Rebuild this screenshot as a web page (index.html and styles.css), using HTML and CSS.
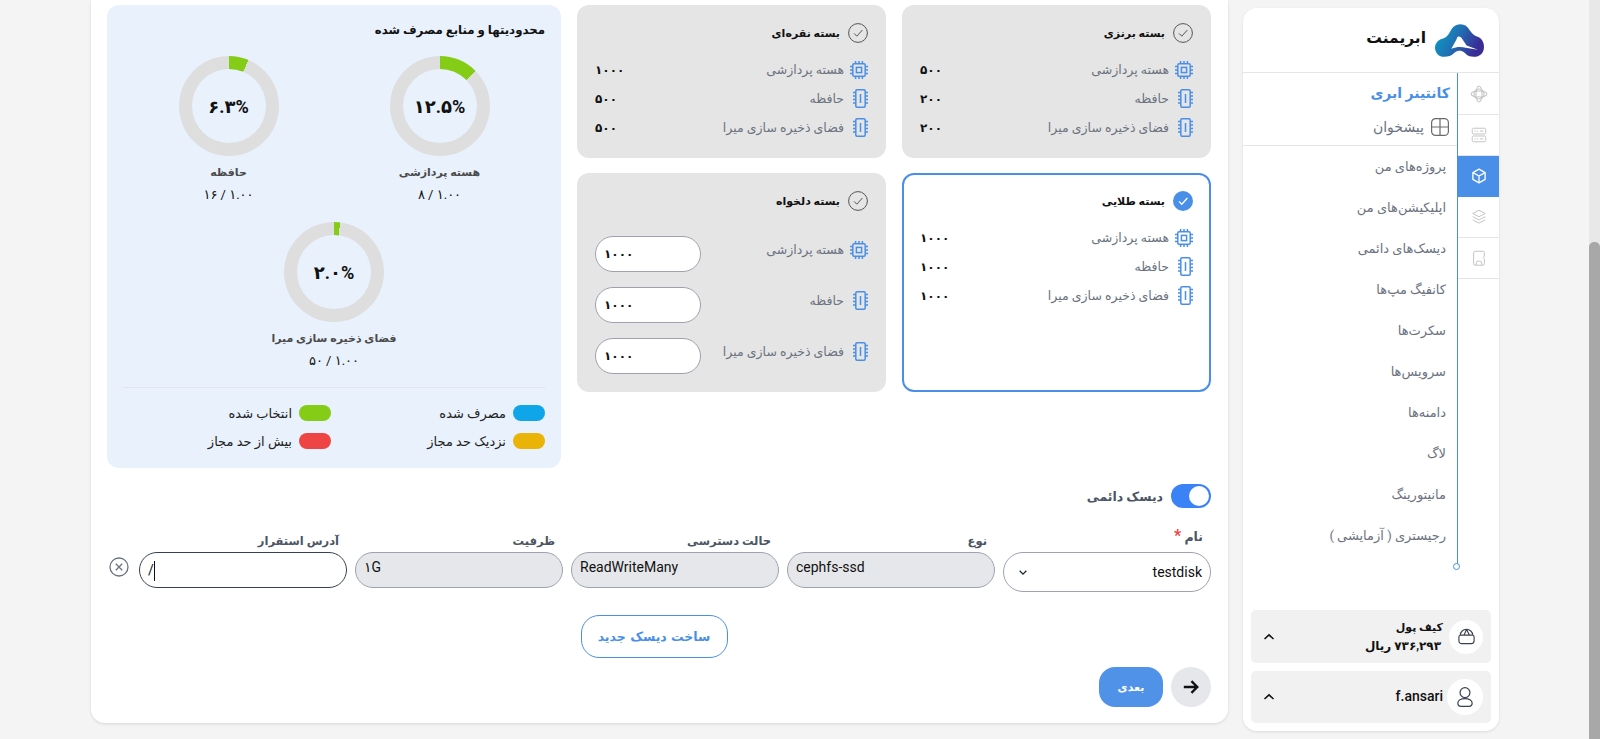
FILE: index.html
```html
<!DOCTYPE html>
<html lang="fa" dir="rtl">
<head>
<meta charset="utf-8">
<title>کانتینر ابری</title>
<link rel="stylesheet" href="styles.css">
</head>
<body>
<svg class="defs" width="0" height="0" aria-hidden="true">
  <defs>
    <symbol id="ic-check" viewBox="0 0 20 20"><circle cx="10" cy="10" r="9.4" fill="none" stroke="currentColor" stroke-width="1"/><path d="M6 10.4l2.8 2.8L14.4 7" fill="none" stroke="currentColor" stroke-width="1"/></symbol>
    <symbol id="ic-cpu" viewBox="0 0 18 18"><g fill="none" stroke="#4a8fe7" stroke-width="1.5"><rect x="2.8" y="2.8" width="12.4" height="12.4" rx="1.2"/><rect x="6.4" y="6.4" width="5.2" height="5.2"/><path d="M5.6 0v2.6M9 0v2.6M12.4 0v2.6M5.6 15.4V18M9 15.4V18M12.4 15.4V18M0 5.6h2.6M0 9h2.6M0 12.4h2.6M15.4 5.6H18M15.4 9H18M15.4 12.4H18"/></g></symbol>
    <symbol id="ic-ram" viewBox="0 0 15 19"><g fill="none" stroke="#4a8fe7" stroke-width="1.5"><rect x="2.8" y=".8" width="9.4" height="17.4" rx="1.2"/><path d="M7.500 5v9M0 3.500h2.600M0 7h2.600M0 10.500h2.600M0 14h2.600M12.400 3.500H15M12.400 7H15M12.400 10.500H15M12.400 14H15"/></g></symbol>
    <symbol id="ic-chev" viewBox="0 0 12 8"><path d="M1.5 6L6 1.8 10.5 6" fill="none" stroke="currentColor" stroke-width="1.6"/></symbol>
  </defs>
</svg>
<div class="page">
  <div class="scrollbar"><div class="thumb"></div></div>

  <aside class="sidebar">
    <header class="brand">
      <svg class="logo" viewBox="0 0 48 32" aria-hidden="true">
        <defs><linearGradient id="lg" x1="0" y1="0" x2="1" y2=".35"><stop offset="0" stop-color="#06a5c9"/><stop offset=".5" stop-color="#1f72b4"/><stop offset="1" stop-color="#3a2c96"/></linearGradient></defs>
        <path fill="url(#lg)" d="M9 32C4 32 0 28 0 23c0-4 3-8 8-9 3-1 5-3 7-7 2-4 5-7 10-7 4 0 7 2 9 6 2 3 4 5 7 6 4 1 7 5 7 10 0 6-4 10-10 10-4 0-6-1-9-4-2-1.500-3-2-5-2s-3 .500-5 2c-3 3-6 4-10 4z"/>
        <path fill="#fff" d="M23 12c2 0 3 1 4 3l4 6 11 4-12-2c-4-1-9-1-14 1l5-9c.700-2 1-3 2-3z"/>
      </svg>
      <span class="brand-name">ابریمنت</span>
    </header>
    <div class="nav">
      <nav class="rail">
        <a class="rail-item"><svg viewBox="0 0 20 20"><g fill="none" stroke="currentColor" stroke-width="1.2"><circle cx="10" cy="10" r="5.6"/><ellipse cx="10" cy="10" rx="8.8" ry="3.4"/><ellipse cx="10" cy="10" rx="3.4" ry="8.8"/></g></svg></a>
        <a class="rail-item"><svg viewBox="0 0 20 20"><g fill="none" stroke="currentColor" stroke-width="1.1"><rect x="2.500" y="2.500" width="15" height="6.400" rx="1.400"/><rect x="2.500" y="11.100" width="15" height="6.400" rx="1.400"/><path d="M5 5.700h1.400M7.600 5.700h1.400M11 5.700h4M5 14.300h1.400M7.600 14.300h1.400M11 14.300h4"/></g></svg></a>
        <a class="rail-item active"><svg viewBox="0 0 20 20"><g fill="none" stroke="currentColor" stroke-width="1.500" stroke-linejoin="round"><path d="M10 2.400l6.800 3.800v7.600L10 17.600l-6.800-3.800V6.200z"/><path d="M3.400 6.300L10 10l6.600-3.700M10 10v7.400"/></g></svg></a>
        <a class="rail-item"><svg viewBox="0 0 20 20"><g fill="none" stroke="currentColor" stroke-width="1.100" stroke-linejoin="round"><path d="M10 2.500l7 3.600-7 3.600-7-3.600z"/><path d="M3 9.600l7 3.600 7-3.600M3 13.200l7 3.600 7-3.600"/></g></svg></a>
        <a class="rail-item"><svg viewBox="0 0 20 20"><g fill="none" stroke="currentColor" stroke-width="1.100" stroke-linejoin="round"><path d="M6 2.500h8.500A1.500 1.500 0 0 1 16 4v4l-1.400 1.400L16 11v5.500a1.500 1.500 0 0 1-1.500 1.500h-9A1.500 1.500 0 0 1 4 16.500v-12a2 2 0 0 1 2-2z"/><path d="M7 18v-2.500a2 2 0 0 1 2-2h2a2 2 0 0 1 2 2V18"/></g></svg></a>
      </nav>
      <div class="menu">
        <div class="menu-head">
          <h2 class="menu-title">کانتینر ابری</h2>
          <a class="menu-dash">
            <svg viewBox="0 0 20 20"><g fill="none" stroke="#6b6b6b" stroke-width="1.200"><rect x="1.600" y="1.600" width="16.800" height="16.800" rx="4"/><path d="M10 1.600v16.800M1.600 10h16.800"/></g></svg>
            <span>پیشخوان</span>
          </a>
        </div>
        <ul class="menu-list">
          <li>پروژه‌های من</li>
          <li>اپلیکیشن‌های من</li>
          <li>دیسک‌های دائمی</li>
          <li>کانفیگ مپ‌ها</li>
          <li>سکرت‌ها</li>
          <li>سرویس‌ها</li>
          <li>دامنه‌ها</li>
          <li>لاگ</li>
          <li>مانیتورینگ</li>
          <li>رجیستری ( آزمایشی )</li>
        </ul>
      </div>
    </div>
    <div class="account">
      <div class="acc-box acc-wallet">
        <span class="acc-icon"><svg viewBox="0 0 20 20"><g fill="none" stroke="#3b4152" stroke-width="1.200" stroke-linejoin="round"><path d="M3.500 8.500C3.500 5 6.500 2.500 10 2.500s6.500 2.500 6.500 6c1 .300 1.500 1 1.500 2v4c0 1.800-1.200 3-3 3H5c-1.800 0-3-1.200-3-3v-4c0-1 .500-1.700 1.500-2z"/><path d="M3.500 8.500h13M10 2.500L7.500 8.500M10 2.500l3 6"/></g></svg></span>
        <div class="acc-text"><strong>کیف پول</strong><strong class="acc-amount">۷۳۶,۲۹۳ ریال</strong></div>
        <svg class="acc-chev"><use href="#ic-chev"/></svg>
      </div>
      <div class="acc-box acc-user">
        <span class="acc-icon big"><svg viewBox="0 0 20 20"><g fill="none" stroke="#3b4152" stroke-width="1.100"><circle cx="10" cy="6" r="4.500"/><path d="M3.500 15.500c0-2.500 3-4 6.500-4s6.500 1.500 6.500 4c0 2-1.500 3-3 3h-7c-1.500 0-3-1-3-3z"/></g></svg></span>
        <span class="acc-name" dir="ltr">f.ansari</span>
        <svg class="acc-chev"><use href="#ic-chev"/></svg>
      </div>
    </div>
  </aside>

  <main class="main">
    <div class="top">
      <section class="plans">
        <article class="plan">
          <h3 class="plan-title"><svg class="check"><use href="#ic-check"/></svg>بسته برنزی</h3>
          <div class="spec"><svg class="i-cpu"><use href="#ic-cpu"/></svg><span class="spec-name">هسته پردازشی</span><b class="spec-val">۵۰۰</b></div>
          <div class="spec"><svg class="i-ram"><use href="#ic-ram"/></svg><span class="spec-name">حافظه</span><b class="spec-val">۲۰۰</b></div>
          <div class="spec"><svg class="i-ram"><use href="#ic-ram"/></svg><span class="spec-name">فضای ذخیره سازی میرا</span><b class="spec-val">۲۰۰</b></div>
        </article>
        <article class="plan">
          <h3 class="plan-title"><svg class="check"><use href="#ic-check"/></svg>بسته نقره‌ای</h3>
          <div class="spec"><svg class="i-cpu"><use href="#ic-cpu"/></svg><span class="spec-name">هسته پردازشی</span><b class="spec-val">۱۰۰۰</b></div>
          <div class="spec"><svg class="i-ram"><use href="#ic-ram"/></svg><span class="spec-name">حافظه</span><b class="spec-val">۵۰۰</b></div>
          <div class="spec"><svg class="i-ram"><use href="#ic-ram"/></svg><span class="spec-name">فضای ذخیره سازی میرا</span><b class="spec-val">۵۰۰</b></div>
        </article>
        <article class="plan selected">
          <h3 class="plan-title"><span class="check-on"><svg viewBox="0 0 20 20"><path d="M6 10.400l2.800 2.800L14.400 7" fill="none" stroke="#fff" stroke-width="1.300"/></svg></span>بسته طلایی</h3>
          <div class="spec"><svg class="i-cpu"><use href="#ic-cpu"/></svg><span class="spec-name">هسته پردازشی</span><b class="spec-val">۱۰۰۰</b></div>
          <div class="spec"><svg class="i-ram"><use href="#ic-ram"/></svg><span class="spec-name">حافظه</span><b class="spec-val">۱۰۰۰</b></div>
          <div class="spec"><svg class="i-ram"><use href="#ic-ram"/></svg><span class="spec-name">فضای ذخیره سازی میرا</span><b class="spec-val">۱۰۰۰</b></div>
        </article>
        <article class="plan custom">
          <h3 class="plan-title"><svg class="check"><use href="#ic-check"/></svg>بسته دلخواه</h3>
          <div class="spec tall"><svg class="i-cpu"><use href="#ic-cpu"/></svg><span class="spec-name">هسته پردازشی</span><span class="spec-input" dir="ltr">۱۰۰۰</span></div>
          <div class="spec tall"><svg class="i-ram"><use href="#ic-ram"/></svg><span class="spec-name">حافظه</span><span class="spec-input" dir="ltr">۱۰۰۰</span></div>
          <div class="spec tall"><svg class="i-ram"><use href="#ic-ram"/></svg><span class="spec-name">فضای ذخیره سازی میرا</span><span class="spec-input" dir="ltr">۱۰۰۰</span></div>
        </article>
      </section>

      <section class="limits">
        <h3 class="limits-title">محدودیتها و منابع مصرف شده</h3>
        <div class="donuts">
          <div class="donut-cell">
            <div class="donut d1"><span>۱۲.۵%</span></div>
            <p class="donut-name">هسته پردازشی</p>
            <p class="donut-val">۱.۰۰ / ۸</p>
          </div>
          <div class="donut-cell">
            <div class="donut d2"><span>۶.۳%</span></div>
            <p class="donut-name">حافظه</p>
            <p class="donut-val">۱.۰۰ / ۱۶</p>
          </div>
          <div class="donut-cell">
            <div class="donut d3"><span>۲.۰%</span></div>
            <p class="donut-name">فضای ذخیره سازی میرا</p>
            <p class="donut-val">۱.۰۰ / ۵۰</p>
          </div>
        </div>
        <ul class="legend">
          <li><i class="sw blue"></i>مصرف شده</li>
          <li><i class="sw green"></i>انتخاب شده</li>
          <li><i class="sw amber"></i>نزدیک حد مجاز</li>
          <li><i class="sw red"></i>بیش از حد مجاز</li>
        </ul>
      </section>
    </div>

    <div class="switch-row">
      <span class="switch"><i></i></span>
      <span class="switch-label">دیسک دائمی</span>
    </div>

    <div class="disk-row">
      <div class="field">
        <label class="f-label name">نام <em>*</em></label>
        <div class="f-box select"><span dir="ltr">testdisk</span><svg class="sel-chev" viewBox="0 0 12 8"><path d="M2 2l4 4 4-4" fill="none" stroke="#1f2937" stroke-width="1.600"/></svg></div>
      </div>
      <div class="field">
        <label class="f-label">نوع</label>
        <div class="f-box off" dir="ltr">cephfs-ssd</div>
      </div>
      <div class="field">
        <label class="f-label">حالت دسترسی</label>
        <div class="f-box off" dir="ltr">ReadWriteMany</div>
      </div>
      <div class="field">
        <label class="f-label">ظرفیت</label>
        <div class="f-box off" dir="ltr">۱G</div>
      </div>
      <div class="field">
        <label class="f-label">آدرس استقرار</label>
        <div class="f-box focus" dir="ltr">/<i class="caret"></i></div>
      </div>
      <svg class="remove" viewBox="0 0 20 20"><g fill="none" stroke="#6b7280" stroke-width="1.300"><circle cx="10" cy="10" r="9"/><path d="M6.800 6.800l6.400 6.400M13.200 6.800l-6.400 6.400"/></g></svg>
    </div>

    <div class="create-row"><button class="create">ساخت دیسک جدید</button></div>

    <div class="actions">
      <button class="arrow"><svg viewBox="0 0 20 20"><path d="M2 10h15M10.500 3.500L17 10l-6.500 6.500" fill="none" stroke="#111" stroke-width="2.600"/></svg></button>
      <button class="next">بعدی</button>
    </div>
  </main>
</div>
</body>
</html>
```
FILE: styles.css
```css
* { box-sizing: border-box; }
html, body { margin: 0; height: 739px; overflow: hidden; }
body { background: #f4f4f4; font-family: "Roboto", "DejaVu Sans", sans-serif; color: #111; }
.defs { position: absolute; }
h2, h3, p, ul { margin: 0; padding: 0; list-style: none; }

.page { display: flex; height: 739px; }

.scrollbar { width: 11px; flex: none; background: #e8e8e8; padding-top: 242px; }
.thumb { height: 497px; background: #a8a8a8; border-radius: 5px 5px 0 0; }

.sidebar { width: 256px; flex: none; margin: 8px 90px 8px 0; background: #fff; border-radius: 14px; box-shadow: 0 1px 3px rgba(0,0,0,.1); display: flex; flex-direction: column; }
.brand { height: 65px; flex: none; display: flex; align-items: center; gap: 9px; padding-inline-start: 15px; border-bottom: 1px solid #e5e5e5; }
.logo { width: 49px; height: 33px; }
.brand-name { font-size: 15.5px; font-weight: 700; color: #111; margin-bottom: 4px; }

.nav { display: flex; height: 496px; flex: none; }
.rail { width: 41px; flex: none; padding-top: 1px; }
.rail-item { display: flex; align-items: center; justify-content: center; height: 41px; color: #c4c4c4; border-bottom: 1px solid #e5e5e5; }
.rail-item svg { width: 18px; height: 18px; }
.rail-item.active { background: #4a8fe7; color: #fff; border-bottom-color: #4a8fe7; }
.menu { flex: 1; border-right: 1px solid #4a8fe7; position: relative; min-width: 0; }
.menu::after { content: ""; position: absolute; bottom: -1px; right: -3px; width: 5px; height: 5px; border-radius: 50%; border: 1px solid #4a8fe7; background: #fff; }
.menu-head { height: 73px; border-bottom: 1px solid #e5e5e5; padding-inline-start: 7px; }
.menu-title { font-size: 14px; font-weight: 700; color: #4a8fe7; line-height: 20px; padding-top: 10px; height: 30px; }
.menu-dash { display: flex; align-items: center; gap: 6px; margin-top: 14px; font-size: 14px; color: #6b7280; }
.menu-dash svg { width: 20px; height: 20px; flex: none; }
.menu-list li { height: 41px; line-height: 41px; font-size: 13px; color: #6b7280; padding-inline-start: 11px; white-space: nowrap; }

.account { margin-top: auto; padding: 0 8px 8px; display: flex; flex-direction: column; gap: 8px; }
.acc-box { background: #f1f1f1; border-radius: 5px; display: flex; align-items: center; padding: 0 8px 0 12px; }
.acc-wallet { height: 53px; }
.acc-user { height: 52px; }
.acc-icon { width: 34px; height: 34px; flex: none; background: #fff; border-radius: 50%; display: flex; align-items: center; justify-content: center; }
.acc-icon.big { width: 36px; height: 36px; }
.acc-icon svg { width: 19px; height: 19px; }
.acc-icon.big svg { width: 22px; height: 22px; }
.acc-text { margin-inline-start: 6px; display: flex; flex-direction: column; font-size: 11px; line-height: 18px; color: #111; }
.acc-text strong { font-weight: 600; }
.acc-text strong.acc-amount { font-size: 12px; padding-inline-start: 2px; }
.acc-name { margin-right: 4px; margin-bottom: 3px; font-size: 14px; font-weight: 500; color: #111; }
.acc-chev { width: 12px; height: 8px; margin-inline-start: auto; color: #111; }

.main { flex: 1; min-width: 0; margin-bottom: 16px; margin-inline-start: 15px; margin-inline-end: 91px; background: #fff; border-radius: 0 0 14px 14px; box-shadow: 0 1px 3px rgba(0,0,0,.12); padding: 5px 17px 0 16px; }

.top { display: flex; gap: 16px; align-items: flex-start; }
.plans { width: 634px; flex: none; display: grid; grid-template-columns: 309px 309px; grid-template-rows: 153px 219px; gap: 15px 16px; }
.plan { background: #e5e5e5; border-radius: 12px; padding: 18px 18px 0; }
.plan.selected { background: #fff; border: 2px solid #4a8fe7; padding: 16px 16px 0; }
.plan-title { display: flex; align-items: center; gap: 8px; font-size: 11px; font-weight: 700; color: #111; height: 20px; margin-bottom: 12px; }
.check { width: 20px; height: 20px; color: #555; flex: none; }
.check-on { width: 20px; height: 20px; background: #4a8fe7; border-radius: 50%; flex: none; display: block; }
.check-on svg { width: 20px; height: 20px; display: block; }
.spec { display: flex; align-items: center; height: 29px; font-size: 12.5px; color: #6b7280; }
.i-cpu { width: 18px; height: 18px; flex: none; margin-inline-end: 6px; }
.i-ram { width: 15px; height: 19px; flex: none; margin-inline-end: 9px; }
.spec-val { margin-inline-start: auto; font-size: 12px; font-weight: 700; color: #111; }
.spec.tall { height: 51px; }
.custom .plan-title { margin-bottom: 13px; }
.spec-input { margin-right: auto; margin-top: 8px; width: 106px; height: 36px; background: #fff; border: 1px solid #9ca3af; border-radius: 18px; line-height: 34px; padding: 0 8px; font-size: 12px; font-weight: 700; color: #111; text-align: left; }

.limits { width: 454px; flex: none; height: 463px; background: #e8f1fc; border-radius: 12px; padding: 15px 16px 0; }
.limits-title { font-size: 11.75px; font-weight: 700; line-height: 20px; color: #111; }
.donuts { display: flex; flex-wrap: wrap; justify-content: center; margin-top: 16px; }
.donut-cell { width: 50%; height: 166px; text-align: center; }
.donut { --pct: 10%; width: 100px; height: 100px; margin: 0 auto; border-radius: 50%; display: flex; align-items: center; justify-content: center; background: conic-gradient(#84cc16 0 var(--pct), #dedede var(--pct) 100%); position: relative; }
.donut::before { content: ""; position: absolute; inset: 13px; background: #e8f1fc; border-radius: 50%; }
.donut span { position: relative; font-size: 18px; font-weight: 700; color: #111; }
.d1 { --pct: 12.5%; }
.d2 { --pct: 6.3%; }
.d3 { --pct: 2%; }
.donut-name { margin-top: 7px; font-size: 11px; font-weight: 700; color: #4b4b4b; line-height: 20px; }
.donut-val { margin-top: 3px; font-size: 13px; color: #111; line-height: 18px; }
.legend { margin-top: -1px; padding-top: 17px; border-top: 1px solid #e2e6ec; display: grid; grid-template-columns: 214px 1fr; row-gap: 12px; font-size: 13px; color: #222; }
.legend li { display: flex; align-items: center; gap: 7px; height: 16px; }
.sw { width: 32px; height: 16px; border-radius: 8px; flex: none; }
.blue { background: #0ea5e9; }
.green { background: #84cc16; }
.amber { background: #eab308; }
.red { background: #ef4444; }

.switch-row { display: flex; align-items: center; gap: 8px; margin-top: 16px; height: 24px; }
.switch { width: 40px; height: 24px; border-radius: 12px; background: #3b82f6; padding: 2px; display: block; }
.switch i { display: block; width: 20px; height: 20px; border-radius: 50%; background: #fff; }
.switch-label { font-size: 12.5px; font-weight: 600; color: #4b5563; }

.disk-row { display: flex; gap: 8px; align-items: flex-start; margin-top: 18px; height: 66px; }
.field { width: 208px; flex: none; padding-top: 26px; position: relative; }
.f-label { position: absolute; top: 6px; right: 8px; font-size: 11.5px; font-weight: 700; color: #4b5563; line-height: 18px; }
.f-label.name { top: 1px; font-size: 12.5px; }
.f-label em { color: #ef4444; font-style: normal; font-size: 16px; }
.f-box { height: 36px; border: 1px solid #9ca3af; border-radius: 18px; font-size: 14px; line-height: 28px; padding: 0 8px; color: #111; text-align: left; }
.f-box.off { background: #e5e7eb; }
.f-box.focus { border-color: #374151; line-height: 34px; background: #fff; }
.caret { display: inline-block; width: 1px; height: 20px; background: #111; vertical-align: middle; }
.f-box.select { height: 40px; display: flex; justify-content: space-between; align-items: center; border-radius: 20px; }
.sel-chev { width: 10px; height: 7px; margin-left: 6px; }
.remove { width: 20px; height: 20px; margin-top: 31px; margin-right: 2px; flex: none; }

.create-row { display: flex; justify-content: center; margin-top: 23px; padding-right: 10px; }
.create { width: 147px; height: 43px; background: #fff; border: 1px solid #4a8fe7; border-radius: 18px; color: #4a8fe7; font: 700 12.5px "DejaVu Sans", sans-serif; }

.actions { display: flex; gap: 8px; margin-top: 9px; }
.arrow { width: 40px; height: 40px; border: 0; border-radius: 50%; background: #e5e7eb; padding: 11px; }
.arrow svg { width: 18px; height: 18px; display: block; }
.next { width: 64px; height: 40px; border: 0; border-radius: 16px; background: #4f92e8; color: #fff; font: 700 11px "DejaVu Sans", sans-serif; }
```
